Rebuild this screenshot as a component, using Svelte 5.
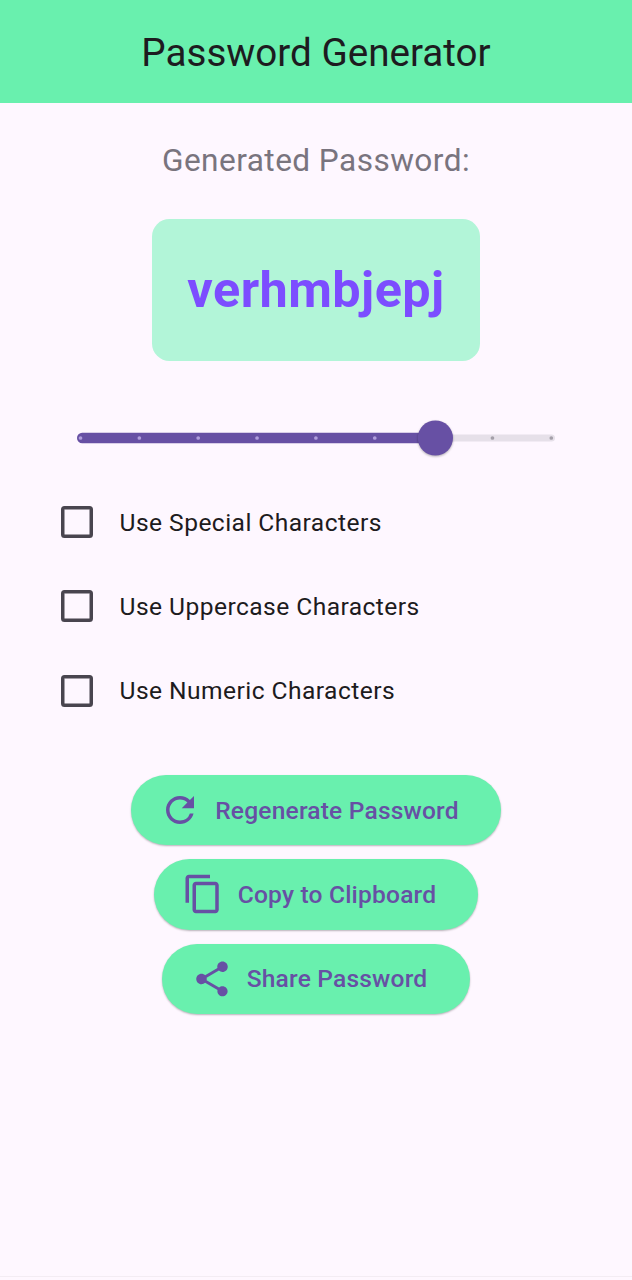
<script>
  const password = 'verhmbjepj';
  const ticks = Array.from({ length: 9 }, (_, i) => i);
  const position = 6;

  let options = $state([
    { label: 'Use Special Characters', checked: false },
    { label: 'Use Uppercase Characters', checked: false },
    { label: 'Use Numeric Characters', checked: false }
  ]);

  const actions = [
    {
      label: 'Regenerate Password',
      icon: 'M17.65 6.35A7.958 7.958 0 0 0 12 4c-4.42 0-7.99 3.58-7.99 8s3.57 8 7.99 8c3.73 0 6.84-2.55 7.73-6h-2.08A5.99 5.99 0 0 1 12 18c-3.31 0-6-2.69-6-6s2.69-6 6-6c1.66 0 3.14.69 4.22 1.78L13 11h7V4l-2.35 2.35z'
    },
    {
      label: 'Copy to Clipboard',
      icon: 'M16 1H4c-1.1 0-2 .9-2 2v14h2V3h12V1zm3 4H8c-1.1 0-2 .9-2 2v14c0 1.1.9 2 2 2h11c1.1 0 2-.9 2-2V7c0-1.1-.9-2-2-2zm0 16H8V7h11v14z'
    },
    {
      label: 'Share Password',
      icon: 'M18 16.08c-.76 0-1.44.3-1.96.77L8.91 12.7c.05-.23.09-.46.09-.7s-.04-.47-.09-.7l7.05-4.11c.54.5 1.25.81 2.04.81 1.66 0 3-1.34 3-3s-1.34-3-3-3-3 1.34-3 3c0 .24.04.47.09.7L8.04 9.81C7.5 9.31 6.79 9 6 9c-1.66 0-3 1.34-3 3s1.34 3 3 3c.79 0 1.5-.31 2.04-.81l7.12 4.16c-.05.21-.08.43-.08.65 0 1.61 1.31 2.92 2.92 2.92s2.92-1.31 2.92-2.92-1.31-2.92-2.92-2.92z'
    }
  ];
</script>

<div class="screen">
  <header><h1>Password Generator</h1></header>
  <main>
    <p class="caption">Generated Password:</p>
    <div class="password">{password}</div>

    <div class="slider" role="slider" tabindex="0" aria-label="Password length" aria-valuenow={position} aria-valuemin="0" aria-valuemax="8">
      <svg width="478" height="44" viewBox="0 0 478 44">
        <rect x="0" y="18.5" width="478" height="7" rx="3.5" fill="#e6e0e9" />
        <rect x="0" y="16.8" width="358" height="10.5" rx="5.2" fill="#6750a4" />
        {#each ticks as i}
          <circle cx={3.5 + i * 58.85} cy="22" r="1.85" fill={i < position ? '#b09ddc' : '#a49fa9'} />
        {/each}
        <circle class="thumb" cx="358.4" cy="22" r="17.6" fill="#6750a4" />
      </svg>
    </div>

    <div class="options">
      {#each options as option}
        <label>
          <input type="checkbox" bind:checked={option.checked} />
          <span>{option.label}</span>
        </label>
      {/each}
    </div>

    <div class="actions">
      {#each actions as action}
        <button>
          <svg width="42" height="42" viewBox="0 0 24 24" fill="currentColor"><path d={action.icon} /></svg>
          <span>{action.label}</span>
        </button>
      {/each}
    </div>
  </main>
  <footer></footer>
</div>

<style>
  :global(body) {
    background: #fef7ff;
  }
  .screen {
    box-sizing: border-box;
    height: 1280px;
    display: flex;
    flex-direction: column;
    background: #fef7ff;
    color: #1d1b20;
    font-family: Roboto, sans-serif;
  }
  header {
    box-sizing: border-box;
    height: 102.5px;
    padding-top: 3px;
    display: flex;
    align-items: center;
    justify-content: center;
    background: #69f0ae;
  }
  h1 {
    margin: 0;
    font-size: 38.62px;
    line-height: 50px;
    font-weight: 400;
  }
  main {
    flex: 1;
    display: flex;
    flex-direction: column;
    align-items: center;
  }
  .caption {
    margin: 35px 0 0;
    font-size: 31.6px;
    line-height: 46px;
    letter-spacing: 0.44px;
    color: #79747e;
  }
  .password {
    box-sizing: border-box;
    width: 328px;
    height: 142px;
    margin-top: 35px;
    padding-bottom: 1px;
    display: flex;
    align-items: center;
    justify-content: center;
    border-radius: 17.5px;
    background: #b2f5d8;
    color: #7c4dff;
    font-size: 50.4px;
    font-weight: 700;
    letter-spacing: 0.44px;
  }
  .slider {
    height: 44px;
    margin-top: 55.5px;
    outline: none;
  }
  .slider svg {
    display: block;
    overflow: visible;
  }
  .thumb {
    filter: drop-shadow(0 1px 1px rgb(0 0 0 / 0.3));
  }
  .options {
    width: 510px;
    margin-top: 20.1px;
  }
  label {
    height: 84.27px;
    display: flex;
    align-items: center;
    gap: 26.6px;
    font-size: 24.58px;
    letter-spacing: 0.44px;
  }
  input {
    appearance: none;
    box-sizing: border-box;
    width: 32px;
    height: 32px;
    margin: 0;
    border: 3px solid #49454f;
    border-radius: 3.5px;
    box-shadow: inset 0 0 0 0.5px #49454f;
  }
  input:checked {
    border-color: #6750a4;
    background: #6750a4;
  }
  .actions {
    margin-top: 42.3px;
    display: flex;
    flex-direction: column;
    align-items: center;
    gap: 14px;
  }
  button {
    height: 70.2px;
    display: flex;
    align-items: center;
    gap: 14px;
    padding: 0 42.2px 0 28.2px;
    border: 0;
    border-radius: 36px;
    background: #69f0ae;
    color: #6750a4;
    font: 500 24.58px Roboto, sans-serif;
    letter-spacing: 0.18px;
    box-shadow: 0 1px 2px rgb(0 0 0 / 0.28);
  }
  footer {
    height: 4px;
    box-sizing: border-box;
    border-top: 1px solid #f3ecf3;
  }
</style>
